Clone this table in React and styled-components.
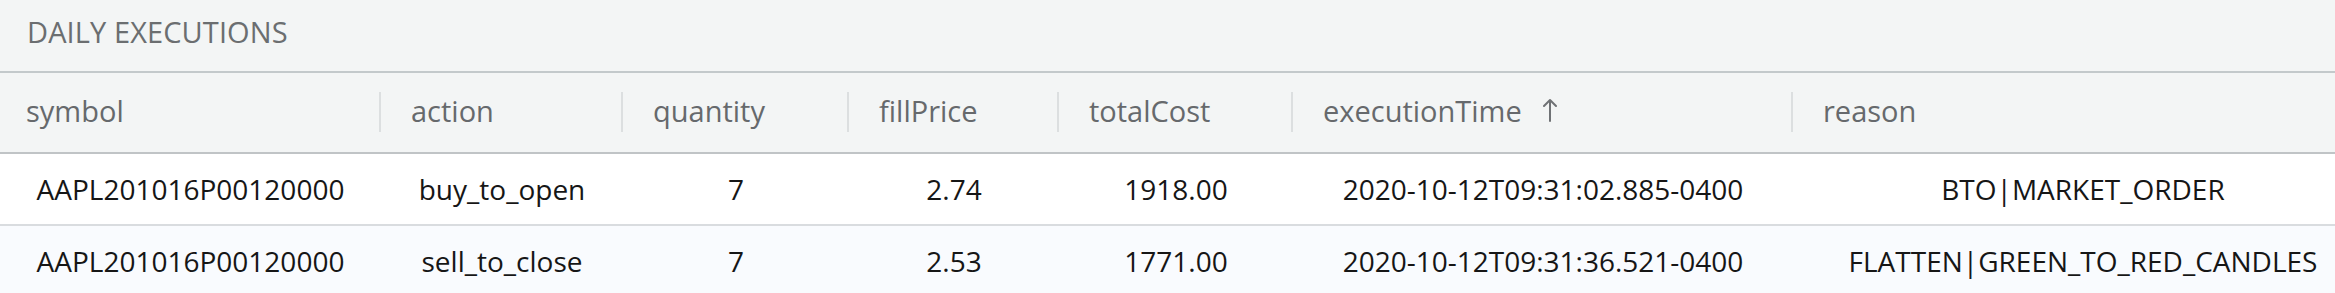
import styled, { createGlobalStyle } from "styled-components";

const GlobalStyle = createGlobalStyle`
  body {
    margin: 0;
    background: #ffffff;
    font-family: "Open Sans", "Noto Sans", sans-serif;
  }
`;

const COLUMNS = [
  { key: "symbol", label: "symbol", width: 381 },
  { key: "action", label: "action", width: 242 },
  { key: "quantity", label: "quantity", width: 226 },
  { key: "fillPrice", label: "fillPrice", width: 210 },
  { key: "totalCost", label: "totalCost", width: 234 },
  { key: "executionTime", label: "executionTime", width: 500, sorted: true },
  { key: "reason", label: "reason", width: 580 },
];

const ROWS = [
  {
    symbol: "AAPL201016P00120000",
    action: "buy_to_open",
    quantity: "7",
    fillPrice: "2.74",
    totalCost: "1918.00",
    executionTime: "2020-10-12T09:31:02.885-0400",
    reason: "BTO|MARKET_ORDER",
  },
  {
    symbol: "AAPL201016P00120000",
    action: "sell_to_close",
    quantity: "7",
    fillPrice: "2.53",
    totalCost: "1771.00",
    executionTime: "2020-10-12T09:31:36.521-0400",
    reason: "FLATTEN|GREEN_TO_RED_CANDLES",
  },
];

const gridTemplate = COLUMNS.map((c) => `${c.width}px`).join(" ");

const Panel = styled.div`
  width: 100%;
  overflow: hidden;
  background: #ffffff;
`;

const Title = styled.div`
  box-sizing: border-box;
  height: 73px;
  padding: 12px 0 0 27px;
  background: #f3f5f5;
  border-bottom: 2px solid #c3c9cb;
  color: #6b6e70;
  font-size: 29px;
  line-height: 40px;
  letter-spacing: 0.1px;
`;

const Row = styled.div`
  display: grid;
  grid-template-columns: ${gridTemplate};
  box-sizing: border-box;
  width: max-content;
  min-width: 100%;
  height: ${(p) => p.$height}px;
  background: ${(p) => p.$bg};
  border-bottom: 2px solid ${(p) => p.$line};
`;

const HeaderRow = styled(Row)`
  background: #f3f5f5;
`;

const HeaderCell = styled.div`
  position: relative;
  display: flex;
  align-items: center;
  padding: 0 0 4px ${(p) => (p.$first ? 26 : 30)}px;
  color: #66696c;
  font-size: 29px;
  white-space: nowrap;

  &::after {
    content: "";
    display: ${(p) => (p.$last ? "none" : "block")};
    position: absolute;
    right: 0;
    top: 19px;
    width: 2px;
    height: 40px;
    background: #dcdfe0;
  }
`;

const SortArrow = styled.svg`
  margin-left: 21px;
  margin-bottom: 2px;
  flex: none;
`;

const Cell = styled.div`
  display: flex;
  align-items: center;
  justify-content: center;
  color: #161616;
  font-size: 28px;
  white-space: nowrap;
`;

const ArrowUp = () => (
  <SortArrow width="14" height="24" viewBox="0 0 14 24">
    <path
      d="M7 23V2M1 8l6-6 6 6"
      fill="none"
      stroke="#6f7275"
      strokeWidth="2"
      strokeLinecap="round"
      strokeLinejoin="round"
    />
  </SortArrow>
);

export default function App() {
  return (
    <Panel>
      <GlobalStyle />
      <Title>DAILY EXECUTIONS</Title>
      <HeaderRow $height={81} $line="#c0c4c6">
        {COLUMNS.map((col, i) => (
          <HeaderCell
            key={col.key}
            $first={i === 0}
            $last={i === COLUMNS.length - 1}
          >
            {col.label}
            {col.sorted && <ArrowUp />}
          </HeaderCell>
        ))}
      </HeaderRow>
      {ROWS.map((row, r) => (
        <Row
          key={r}
          $height={72}
          $bg={r % 2 === 0 ? "#ffffff" : "#f9fbfe"}
          $line="#d9dcdf"
        >
          {COLUMNS.map((col) => (
            <Cell key={col.key}>{row[col.key]}</Cell>
          ))}
        </Row>
      ))}
    </Panel>
  );
}
